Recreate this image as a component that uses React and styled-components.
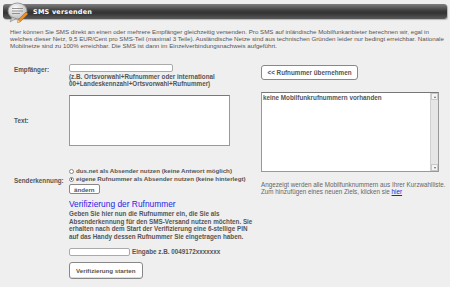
import React from 'react'
import styled, { createGlobalStyle } from 'styled-components'

const GlobalStyle = createGlobalStyle`
  body {
    margin: 0;
    background: #efefef;
    font-family: "Liberation Sans", Arial, sans-serif;
    color: #444;
  }
`

const Page = styled.div`
  width: 450px;
  height: 287px;
  overflow: hidden;
`

const Header = styled.div`
  margin: 4px 3px 0 3px;
  height: 15px;
  border-radius: 3px;
  background: linear-gradient(#808080, #3c3c3c 45%, #333 60%, #5a5a5a);
  box-shadow: 1px 1px 1px rgba(0, 0, 0, 0.25);
  display: flex;
  align-items: center;
  gap: 4px;
  padding-left: 4px;
`

const HeaderTitle = styled.span`
  color: #fff;
  font-family: "DejaVu Sans", Verdana, sans-serif;
  font-weight: bold;
  font-size: 6.5px;
  letter-spacing: 0.2px;
`

const Intro = styled.p`
  margin: 9px 10px 0 10px;
  font-size: 6.2px;
  line-height: 7px;
  color: #555;
  white-space: nowrap;
`

const Main = styled.div`
  display: flex;
  margin-top: 15px;
`

const FormColumn = styled.div`
  width: 247px;
  padding-left: 14px;
  display: grid;
  grid-template-columns: 55px 1fr;
  align-items: center;
`

const Label = styled.div`
  font-size: 6.3px;
  font-weight: bold;
  color: #555;
  align-self: ${p => p.top ? 'start' : 'center'};
  padding-top: ${p => p.top ? 2 : 0}px;
  margin-top: ${p => p.mt || 0}px;
`

const Field = styled.div`
  display: flex;
  flex-direction: column;
  align-items: flex-start;
  margin-top: ${p => p.mt || 0}px;
`

const TextInput = styled.input`
  box-sizing: border-box;
  width: ${p => p.w}px;
  height: 8px;
  border: 1px solid #aaa;
  border-radius: 2px;
  background: #fff;
  padding: 0;
`

const Hint = styled.div`
  font-size: 6.3px;
  font-weight: bold;
  line-height: 7px;
  color: #555;
  margin-top: 1px;
  white-space: nowrap;
`

const TextArea = styled.div`
  box-sizing: border-box;
  width: 161px;
  height: 51px;
  border: 1px solid #999;
  border-top-color: #777;
  background: #fff;
`

const RadioRow = styled.label`
  display: flex;
  align-items: center;
  gap: 2px;
  font-size: 6.2px;
  font-weight: bold;
  line-height: 8px;
  color: #555;
  white-space: nowrap;
`

const Radio = styled.span`
  box-sizing: border-box;
  width: 5px;
  height: 5px;
  border-radius: 50%;
  border: 1px solid #888;
  background: #fff;
  display: flex;
  align-items: center;
  justify-content: center;

  &::after {
    content: '';
    width: 1.5px;
    height: 1.5px;
    border-radius: 50%;
    background: ${p => p.checked ? '#333' : 'transparent'};
  }
`

const SmallButton = styled.button`
  margin-top: 1px;
  padding: 0 4px;
  height: 10px;
  border: 1px solid #888;
  border-radius: 2px;
  background: #fff;
  font-family: inherit;
  font-size: 6.2px;
  font-weight: bold;
  color: #555;
`

const Verify = styled.div`
  grid-column: 2;
  display: flex;
  flex-direction: column;
  align-items: flex-start;
  margin-top: 5px;
`

const VerifyTitle = styled.div`
  font-size: 8.4px;
  color: #1f1fe6;
  line-height: 10px;
`

const VerifyText = styled.div`
  font-size: 6.3px;
  font-weight: bold;
  line-height: 7.7px;
  color: #555;
  margin-top: 1px;
  white-space: nowrap;
`

const InputRow = styled.div`
  display: flex;
  align-items: center;
  gap: 2px;
  margin-top: 7px;
  font-size: 6.3px;
  font-weight: bold;
  color: #555;
`

const BigButton = styled.button`
  margin-top: 6px;
  height: 17px;
  padding: 0 6px;
  border: 1px solid #888;
  border-radius: 3px;
  background: #fff;
  box-shadow: inset 0 -1px 0 #ddd;
  font-family: inherit;
  font-size: 6.2px;
  font-weight: bold;
  color: #555;
`

const SideColumn = styled.div`
  width: 178px;
  display: flex;
  flex-direction: column;
  align-items: flex-start;
`

const TakeButton = styled.button`
  margin-top: 1px;
  height: 15px;
  width: 97px;
  border: 1px solid #888;
  border-radius: 3px;
  background: #fff;
  font-family: inherit;
  font-size: 6.3px;
  font-weight: bold;
  color: #555;
  padding: 0;
`

const ListBox = styled.div`
  box-sizing: border-box;
  margin-top: 12px;
  width: 178px;
  height: 80px;
  border: 1px solid #999;
  border-top-color: #777;
  background: #fff;
  display: flex;
`

const ListText = styled.div`
  flex: 1;
  font-size: 6.3px;
  font-weight: bold;
  color: #555;
  padding: 1px 1px;
`

const Scrollbar = styled.div`
  width: 7px;
  background: #e6e6e6;
  border-left: 1px solid #d0d0d0;
  display: flex;
  flex-direction: column;
  justify-content: space-between;
`

const ScrollArrow = styled.div`
  height: 7px;
  background: #f4f4f4;
  border: 1px solid #c8c8c8;
  box-sizing: border-box;
  display: flex;
  align-items: center;
  justify-content: center;

  &::after {
    content: '';
    border-left: 1.5px solid transparent;
    border-right: 1.5px solid transparent;
    ${p => p.down ? 'border-top: 2px solid #666;' : 'border-bottom: 2px solid #666;'}
  }
`

const Note = styled.div`
  margin-top: 9px;
  font-size: 6.3px;
  line-height: 7px;
  color: #666;
  white-space: nowrap;
`

const Link = styled.a`
  color: #2323d8;
  text-decoration: underline;
`

function SmsIcon() {
  return (
    <svg width="22" height="21" viewBox="0 0 22 21" style={{ marginTop: 1, flexShrink: 0 }}>
      <defs>
        <radialGradient id="bub" cx="0.4" cy="0.35" r="0.7">
          <stop offset="0" stopColor="#ffffff" />
          <stop offset="1" stopColor="#b8b8b8" />
        </radialGradient>
      </defs>
      <ellipse cx="10.5" cy="9" rx="9.5" ry="8" fill="url(#bub)" stroke="#8a8a8a" strokeWidth="0.8" />
      <path d="M5 15 L3 20 L9 16.5 Z" fill="#c8c8c8" stroke="#8a8a8a" strokeWidth="0.6" />
      <line x1="5" y1="6.5" x2="16" y2="6.5" stroke="#888" strokeWidth="0.9" />
      <line x1="5" y1="9" x2="16" y2="9" stroke="#888" strokeWidth="0.9" />
      <line x1="5" y1="11.5" x2="13" y2="11.5" stroke="#888" strokeWidth="0.9" />
      <path d="M19 10 L21 12 L13 20 L10.5 20.5 L11 18 Z" fill="#e8902a" stroke="#9a5a14" strokeWidth="0.5" />
      <path d="M11 18 L10.5 20.5 L13 20 Z" fill="#f3d3a0" />
    </svg>
  )
}

export default function App() {
  return (
    <Page>
      <GlobalStyle />
      <Header>
        <SmsIcon />
        <HeaderTitle>SMS versenden</HeaderTitle>
      </Header>
      <Intro>
        Hier können Sie SMS direkt an einen oder mehrere Empfänger gleichzeitig versenden. Pro SMS auf inländische Mobilfunkanbieter berechnen wir, egal in<br />
        welches dieser Netz, 9,5 EUR/Cent pro SMS-Teil (maximal 3 Teile). Ausländische Netze sind aus technischen Gründen leider nur bedingt erreichbar. Nationale<br />
        Mobilnetze sind zu 100% erreichbar. Die SMS ist dann im Einzelverbindungsnachweis aufgeführt.
      </Intro>
      <Main>
        <FormColumn>
          <Label top>Empfänger:</Label>
          <Field>
            <TextInput w={104} />
            <Hint>
              (z.B. Ortsvorwahl+Rufnummer oder international<br />
              00+Landeskennzahl+Ortsvorwahl+Rufnummer)
            </Hint>
          </Field>
          <Label mt={8}>Text:</Label>
          <Field mt={8}>
            <TextArea />
          </Field>
          <Label mt={20}>Senderkennung:</Label>
          <Field mt={21}>
            <RadioRow><Radio /> dus.net als Absender nutzen (keine Antwort möglich)</RadioRow>
            <RadioRow><Radio checked /> eigene Rufnummer als Absender nutzen (keine hinterlegt)</RadioRow>
            <SmallButton>ändern</SmallButton>
          </Field>
          <Verify>
            <VerifyTitle>Verifizierung der Rufnummer</VerifyTitle>
            <VerifyText>
              Geben Sie hier nun die Rufnummer ein, die Sie als<br />
              Absenderkennung für den SMS-Versand nutzen möchten. Sie<br />
              erhalten nach dem Start der Verifizierung eine 6-stellige PIN<br />
              auf das Handy dessen Rufnummer Sie eingetragen haben.
            </VerifyText>
            <InputRow>
              <TextInput w={61} />
              Eingabe z.B. 0049172xxxxxxx
            </InputRow>
            <BigButton>Verifizierung starten</BigButton>
          </Verify>
        </FormColumn>
        <SideColumn>
          <TakeButton>&lt;&lt; Rufnummer übernehmen</TakeButton>
          <ListBox>
            <ListText>keine Mobilfunkrufnummern vorhanden</ListText>
            <Scrollbar>
              <ScrollArrow />
              <ScrollArrow down />
            </Scrollbar>
          </ListBox>
          <Note>
            Angezeigt werden alle Mobilfunknummern aus Ihrer Kurzwahlliste.<br />
            Zum hinzufügen eines neuen Ziels, klicken sie <Link>hier</Link>
          </Note>
        </SideColumn>
      </Main>
    </Page>
  )
}
